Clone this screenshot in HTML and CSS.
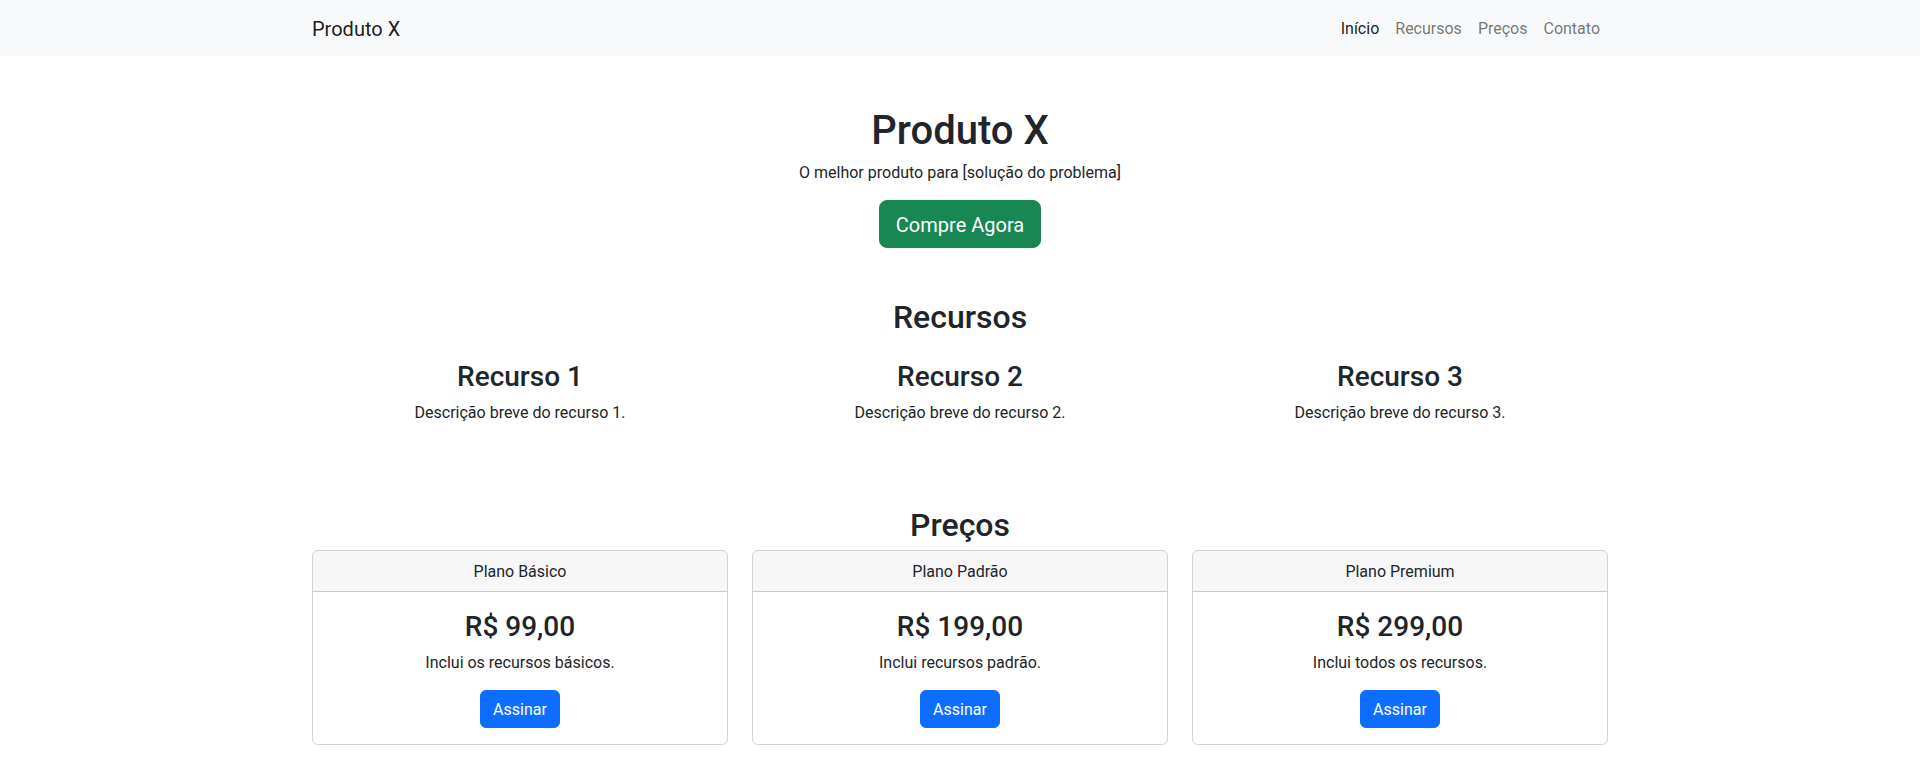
FILE: index.html
```html
<!DOCTYPE html>
<html lang="pt-BR">
<head>
<meta charset="utf-8">
<title>Produto X</title>
<link rel="stylesheet" href="styles.css">
</head>
<body>
<nav class="navbar">
  <div class="container nav-inner">
    <a class="brand" href="#">Produto X</a>
    <ul class="nav">
      <li><a class="nav-link active" href="#">Início</a></li>
      <li><a class="nav-link" href="#recursos">Recursos</a></li>
      <li><a class="nav-link" href="#precos">Preços</a></li>
      <li><a class="nav-link" href="#contato">Contato</a></li>
    </ul>
  </div>
</nav>

<header class="hero">
  <h1 class="hero-title">Produto X</h1>
  <p class="hero-lead">O melhor produto para [solução do problema]</p>
  <a class="btn btn-success btn-lg" href="#">Compre Agora</a>
</header>

<section class="container features" id="recursos">
  <h2 class="section-title features-title">Recursos</h2>
  <div class="row">
    <div class="col">
      <h3 class="feature-title">Recurso 1</h3>
      <p class="text">Descrição breve do recurso 1.</p>
    </div>
    <div class="col">
      <h3 class="feature-title">Recurso 2</h3>
      <p class="text">Descrição breve do recurso 2.</p>
    </div>
    <div class="col">
      <h3 class="feature-title">Recurso 3</h3>
      <p class="text">Descrição breve do recurso 3.</p>
    </div>
  </div>
</section>

<section class="container pricing" id="precos">
  <h2 class="section-title">Preços</h2>
  <div class="cards">
    <div class="card">
      <div class="card-header">Plano Básico</div>
      <div class="card-body">
        <h3 class="price">R$ 99,00</h3>
        <p class="text">Inclui os recursos básicos.</p>
        <a class="btn btn-primary" href="#">Assinar</a>
      </div>
    </div>
    <div class="card">
      <div class="card-header">Plano Padrão</div>
      <div class="card-body">
        <h3 class="price">R$ 199,00</h3>
        <p class="text">Inclui recursos padrão.</p>
        <a class="btn btn-primary" href="#">Assinar</a>
      </div>
    </div>
    <div class="card">
      <div class="card-header">Plano Premium</div>
      <div class="card-body">
        <h3 class="price">R$ 299,00</h3>
        <p class="text">Inclui todos os recursos.</p>
        <a class="btn btn-primary" href="#">Assinar</a>
      </div>
    </div>
  </div>
</section>
</body>
</html>
```

FILE: styles.css
```css
* { box-sizing: border-box; }
html, body { margin: 0; padding: 0; }
body {
  font-family: Roboto, "Open Sans", "DejaVu Sans", sans-serif;
  font-size: 16px;
  line-height: 1.5;
  color: #212529;
  background: #fff;
}
h1, h2, h3, p { margin: 0; }
a { text-decoration: none; }

.container {
  width: 1320px;
  margin: 0 auto;
  padding: 0 12px;
}

/* navbar */
.navbar {
  background: #f8f9fa;
  padding: 8px 0;
}
.nav-inner {
  display: flex;
  align-items: center;
  justify-content: space-between;
}
.brand {
  font-size: 20px;
  line-height: 30px;
  padding: 6px 0 4px;
  color: rgba(0,0,0,.9);
}
.nav {
  display: flex;
  list-style: none;
  margin: 0;
  padding: 0;
}
.nav-link {
  display: block;
  padding: 9px 8px 7px;
  color: rgba(0,0,0,.55);
}
.nav-link.active { color: rgba(0,0,0,.9); }

/* hero */
.hero {
  text-align: center;
  padding: 48px 0;
}
.hero-title {
  font-size: 40px;
  font-weight: 500;
  line-height: 1.2;
  padding-top: 3px;
  margin-bottom: 5px;
}
.hero-lead {
  padding-top: 1px;
  margin-bottom: 15px;
}

.btn {
  display: inline-block;
  border: 1px solid transparent;
  color: #fff;
  font-size: 16px;
  line-height: 24px;
  padding: 6px 12px;
  border-radius: 6px;
}
.btn-lg {
  font-size: 20px;
  line-height: 30px;
  padding: 9px 16px 7px;
  border-radius: 8px;
}
.btn-success { background: #198754; border-color: #198754; }
.btn-primary { background: #0d6efd; border-color: #0d6efd; }

/* sections */
.section-title {
  font-size: 32px;
  font-weight: 500;
  line-height: 1.2;
  text-align: center;
  padding-top: 2px;
  margin-bottom: 6px;
}
.features { padding-bottom: 64px; }
.features-title { margin-bottom: 22px; }
.row {
  display: grid;
  grid-template-columns: repeat(3, 1fr);
  column-gap: 24px;
}
.col { text-align: center; }
.feature-title, .price {
  font-size: 28px;
  font-weight: 500;
  line-height: 1.2;
  padding-top: 2px;
  margin-bottom: 6px;
}
.text {
  padding-top: 1px;
  margin-bottom: 15px;
}

/* pricing */
.pricing { padding-bottom: 48px; }
.cards {
  display: grid;
  grid-template-columns: repeat(3, 1fr);
  gap: 24px;
}
.card {
  border: 1px solid rgba(0,0,0,.175);
  border-radius: 6px;
  text-align: center;
  overflow: hidden;
}
.card-header {
  background: rgba(0,0,0,.03);
  border-bottom: 1px solid rgba(0,0,0,.175);
  padding: 9px 16px 7px;
}
.card-body { padding: 16px; }
.card-body .btn { padding: 7px 12px 5px; }
```
